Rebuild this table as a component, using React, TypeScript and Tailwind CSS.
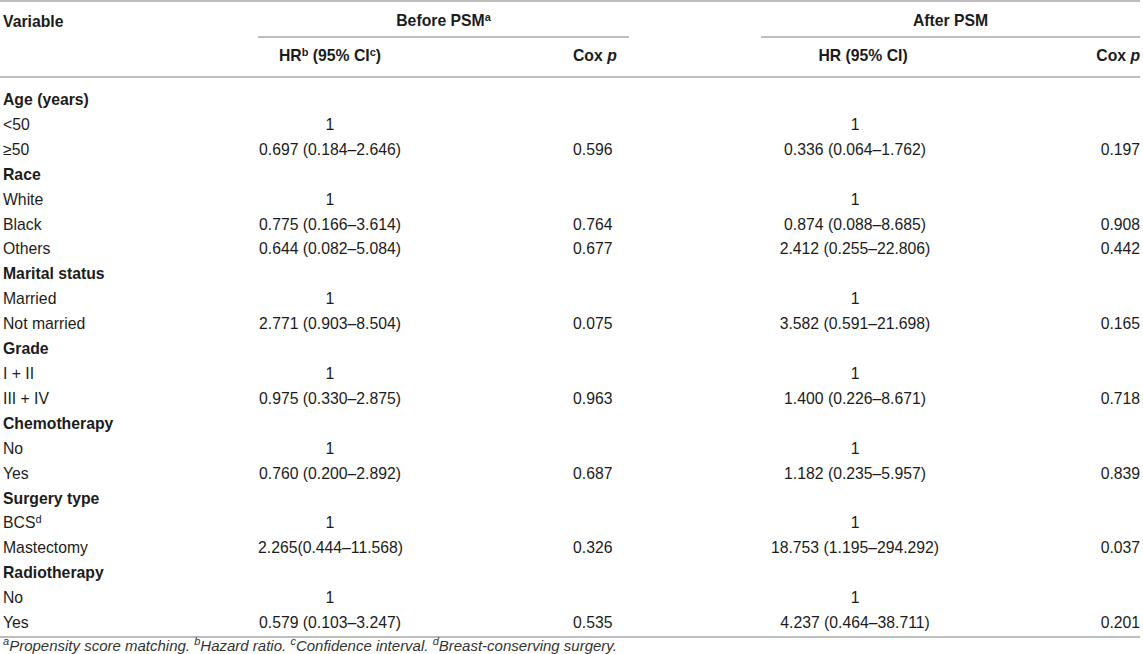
type Row =
  | { kind: "group"; label: string }
  | { kind: "item"; label: React.ReactNode; hr1: string; p1?: string; hr2: string; p2?: string };

const rows: Row[] = [
  { kind: "group", label: "Age (years)" },
  { kind: "item", label: "<50", hr1: "1", hr2: "1" },
  { kind: "item", label: "≥50", hr1: "0.697 (0.184–2.646)", p1: "0.596", hr2: "0.336 (0.064–1.762)", p2: "0.197" },
  { kind: "group", label: "Race" },
  { kind: "item", label: "White", hr1: "1", hr2: "1" },
  { kind: "item", label: "Black", hr1: "0.775 (0.166–3.614)", p1: "0.764", hr2: "0.874 (0.088–8.685)", p2: "0.908" },
  { kind: "item", label: "Others", hr1: "0.644 (0.082–5.084)", p1: "0.677", hr2: "2.412 (0.255–22.806)", p2: "0.442" },
  { kind: "group", label: "Marital status" },
  { kind: "item", label: "Married", hr1: "1", hr2: "1" },
  { kind: "item", label: "Not married", hr1: "2.771 (0.903–8.504)", p1: "0.075", hr2: "3.582 (0.591–21.698)", p2: "0.165" },
  { kind: "group", label: "Grade" },
  { kind: "item", label: "I + II", hr1: "1", hr2: "1" },
  { kind: "item", label: "III + IV", hr1: "0.975 (0.330–2.875)", p1: "0.963", hr2: "1.400 (0.226–8.671)", p2: "0.718" },
  { kind: "group", label: "Chemotherapy" },
  { kind: "item", label: "No", hr1: "1", hr2: "1" },
  { kind: "item", label: "Yes", hr1: "0.760 (0.200–2.892)", p1: "0.687", hr2: "1.182 (0.235–5.957)", p2: "0.839" },
  { kind: "group", label: "Surgery type" },
  {
    kind: "item",
    label: (
      <>
        BCS<sup className="text-[11px]">d</sup>
      </>
    ),
    hr1: "1",
    hr2: "1",
  },
  { kind: "item", label: "Mastectomy", hr1: "2.265(0.444–11.568)", p1: "0.326", hr2: "18.753 (1.195–294.292)", p2: "0.037" },
  { kind: "group", label: "Radiotherapy" },
  { kind: "item", label: "No", hr1: "1", hr2: "1" },
  { kind: "item", label: "Yes", hr1: "0.579 (0.103–3.247)", p1: "0.535", hr2: "4.237 (0.464–38.711)", p2: "0.201" },
];

function CoxP() {
  return (
    <>
      Cox <i>p</i>
    </>
  );
}

export default function App() {
  return (
    <div className="bg-white text-[#1c1c1c] font-['Liberation_Sans',Arial,sans-serif] text-[15.75px] w-[1143px] h-[654px] overflow-hidden">
      <table className="w-[1140px] table-fixed border-collapse">
        <colgroup>
          <col className="w-[258px]" />
          <col className="w-[144px]" />
          <col className="w-[171px]" />
          <col className="w-[56px]" />
          <col className="w-[132px]" />
          <col className="w-[188px]" />
          <col className="w-[191px]" />
        </colgroup>
        <thead>
          <tr className="border-t-2 border-[#bdbdbd] font-bold">
            <th className="text-left pl-[3px] pt-[9px] pb-[5px] leading-5 font-bold">Variable</th>
            <th colSpan={3} className="pt-[9px] pb-[5px] leading-5 font-bold border-b-2 border-[#bdbdbd]">
              Before PSM<sup className="text-[11px]">a</sup>
            </th>
            <th />
            <th colSpan={2} className="pt-[9px] pb-[5px] leading-5 font-bold border-b-2 border-[#bdbdbd]">
              After PSM
            </th>
          </tr>
          <tr className="border-b-2 border-[#bdbdbd]">
            <th />
            <th className="pt-[8px] pb-[10px] leading-5 font-bold whitespace-nowrap">
              HR<sup className="text-[11px]">b</sup> (95% CI<sup className="text-[11px]">c</sup>)
            </th>
            <th />
            <th className="pt-[8px] pb-[10px] leading-5 font-bold text-left whitespace-nowrap">
              <CoxP />
            </th>
            <th />
            <th className="pt-[8px] pb-[10px] pl-[16px] leading-5 font-bold whitespace-nowrap">HR (95% CI)</th>
            <th className="pt-[8px] pb-[10px] leading-5 font-bold text-right whitespace-nowrap">
              <CoxP />
            </th>
          </tr>
        </thead>
        <tbody className="border-b-2 border-[#bdbdbd]">
          <tr>
            <td colSpan={7} className="h-[11px] p-0" />
          </tr>
          {rows.map((r, i) =>
            r.kind === "group" ? (
              <tr key={i}>
                <td colSpan={7} className="pl-[3px] leading-[24.9px] font-bold">
                  {r.label}
                </td>
              </tr>
            ) : (
              <tr key={i} className="leading-[24.9px]">
                <td className="pl-[3px] whitespace-nowrap">{r.label}</td>
                <td className="text-center whitespace-nowrap">{r.hr1}</td>
                <td />
                <td className="text-left">{r.p1}</td>
                <td />
                <td className="text-center whitespace-nowrap">{r.hr2}</td>
                <td className="text-right">{r.p2}</td>
              </tr>
            )
          )}
        </tbody>
      </table>
      <p className="pl-[3px] italic text-[15px] leading-[15px] text-[#333]">
        <sup className="text-[11px]">a</sup>Propensity score matching. <sup className="text-[11px]">b</sup>Hazard ratio.{" "}
        <sup className="text-[11px]">c</sup>Confidence interval. <sup className="text-[11px]">d</sup>Breast-conserving
        surgery.
      </p>
    </div>
  );
}
